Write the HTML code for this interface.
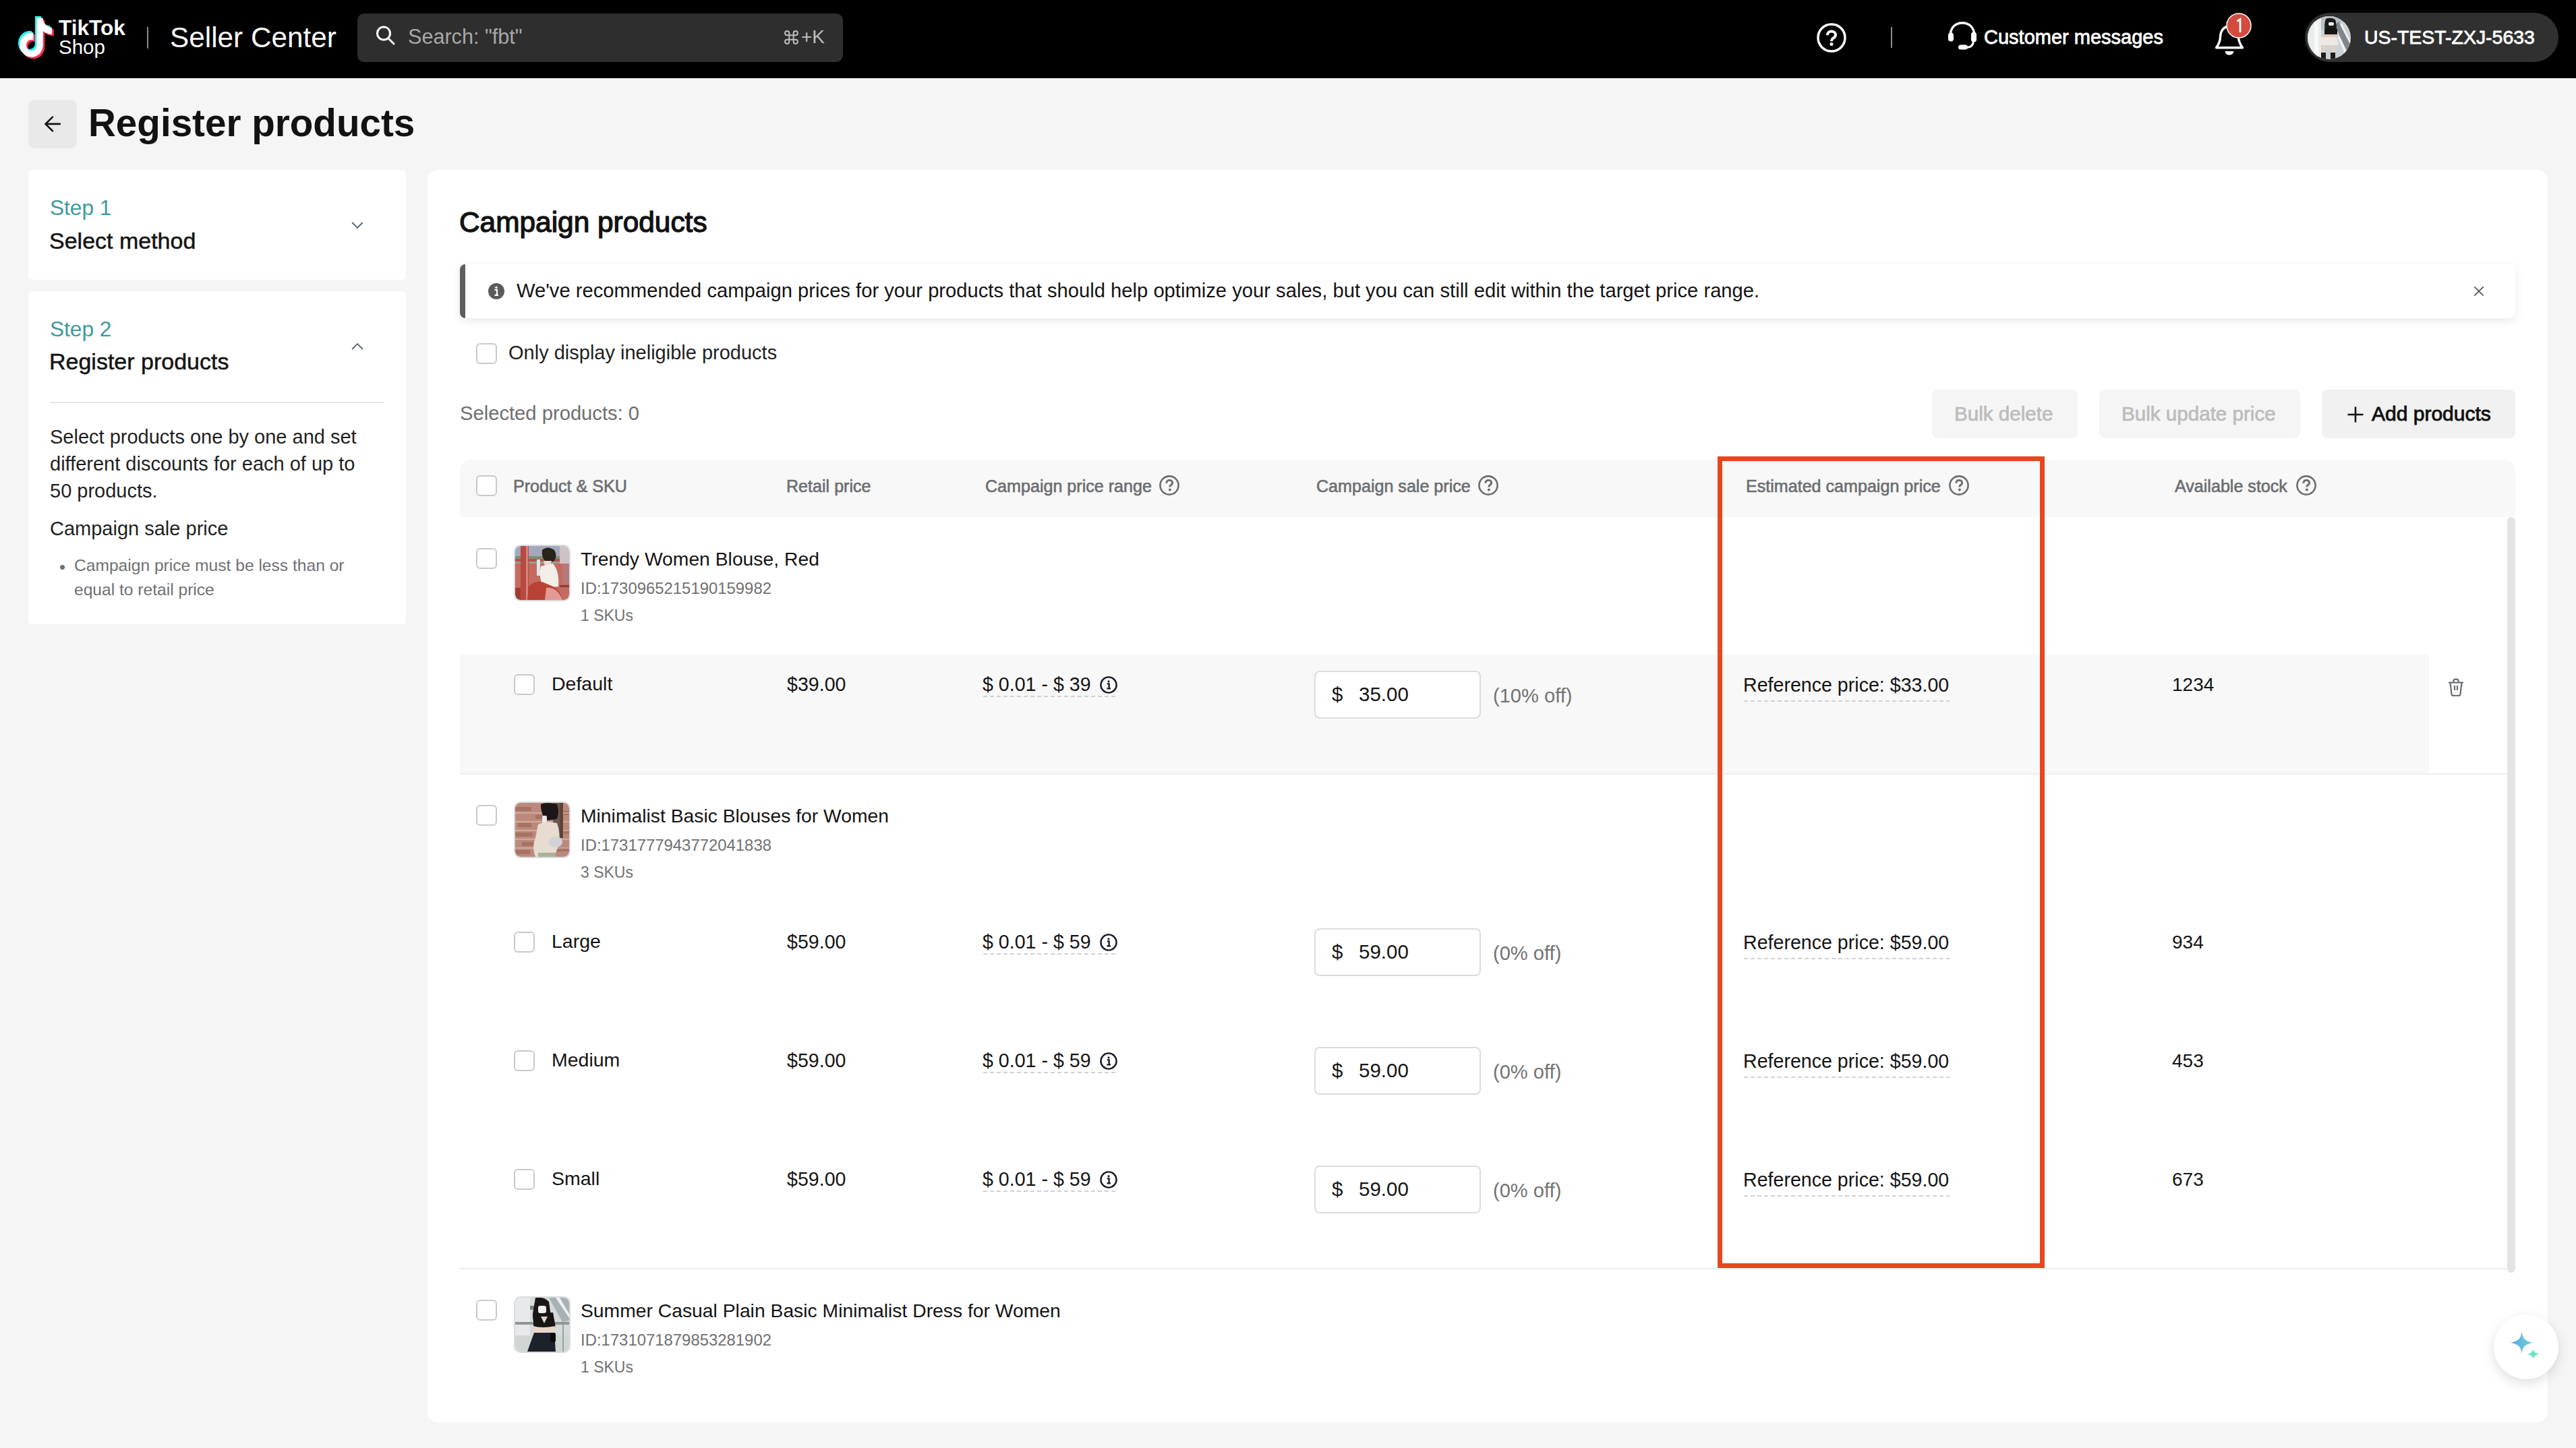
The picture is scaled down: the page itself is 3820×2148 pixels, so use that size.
<!DOCTYPE html>
<html><head><meta charset="utf-8"><title>Register products</title>
<style>
html,body{margin:0;padding:0;width:3820px;height:2148px;overflow:hidden;background:#f5f5f5;}
body{position:relative;font-family:"Liberation Sans",sans-serif;}
.t{position:absolute;white-space:nowrap;font-family:"Liberation Sans",sans-serif;}
.r{position:absolute;}
</style></head><body>
<div class="r" style="left:0px;top:0px;width:3820px;height:116px;background:#000"></div>
<svg class="r" style="left:0px;top:0px;" width="120" height="116" viewBox="0 0 120 116"><path transform="translate(23.40,24.00) scale(2.28,2.42)" d="M12.525.02c1.31-.02 2.61-.01 3.91-.02.08 1.53.63 3.09 1.75 4.17 1.12 1.11 2.7 1.62 4.24 1.79v4.03c-1.44-.05-2.89-.35-4.2-.97-.57-.26-1.1-.59-1.62-.93-.01 2.92.01 5.84-.02 8.75-.08 1.4-.54 2.79-1.35 3.94-1.310 1.92-3.58 3.17-5.91 3.21-1.43.08-2.86-.31-4.08-1.03-2.02-1.19-3.44-3.37-3.65-5.71-.02-.5-.03-1-.01-1.49.18-1.9 1.12-3.72 2.58-4.96 1.66-1.44 3.98-2.13 6.15-1.72.02 1.480-.04 2.96-.04 4.44-.99-.32-2.15-.23-3.02.37-.63.41-1.11 1.04-1.36 1.75-.21.51-.15 1.07-.14 1.61.24 1.64 1.82 3.020 3.5 2.87 1.12-.01 2.19-.66 2.77-1.61.19-.33.4-.67.41-1.06.1-1.79.06-3.57.07-5.36.01-4.03-.01-8.05.02-12.07z" fill="#25F4EE"/><path transform="translate(28.60,29.20) scale(2.28,2.42)" d="M12.525.02c1.31-.02 2.61-.01 3.91-.02.08 1.53.63 3.09 1.75 4.17 1.12 1.11 2.7 1.62 4.24 1.79v4.03c-1.44-.05-2.89-.35-4.2-.97-.57-.26-1.1-.59-1.62-.93-.01 2.92.01 5.84-.02 8.75-.08 1.4-.54 2.79-1.35 3.94-1.310 1.92-3.58 3.17-5.91 3.21-1.43.08-2.86-.31-4.08-1.03-2.02-1.19-3.44-3.37-3.65-5.71-.02-.5-.03-1-.01-1.49.18-1.9 1.12-3.72 2.58-4.96 1.66-1.44 3.98-2.13 6.15-1.72.02 1.480-.04 2.96-.04 4.44-.99-.32-2.15-.23-3.02.37-.63.41-1.11 1.04-1.36 1.75-.21.51-.15 1.07-.14 1.61.24 1.64 1.82 3.020 3.5 2.87 1.12-.01 2.19-.66 2.77-1.61.19-.33.4-.67.41-1.06.1-1.79.06-3.57.07-5.36.01-4.03-.01-8.05.02-12.07z" fill="#FE2C55"/><path transform="translate(26.00,26.60) scale(2.28,2.42)" d="M12.525.02c1.31-.02 2.61-.01 3.91-.02.08 1.53.63 3.09 1.75 4.17 1.12 1.11 2.7 1.62 4.24 1.79v4.03c-1.44-.05-2.89-.35-4.2-.97-.57-.26-1.1-.59-1.62-.93-.01 2.92.01 5.84-.02 8.75-.08 1.4-.54 2.79-1.35 3.94-1.310 1.92-3.58 3.17-5.91 3.21-1.43.08-2.86-.31-4.08-1.03-2.02-1.19-3.44-3.37-3.65-5.71-.02-.5-.03-1-.01-1.49.18-1.9 1.12-3.72 2.58-4.96 1.66-1.44 3.98-2.13 6.15-1.72.02 1.480-.04 2.96-.04 4.44-.99-.32-2.15-.23-3.02.37-.63.41-1.11 1.04-1.36 1.75-.21.51-.15 1.07-.14 1.61.24 1.64 1.82 3.020 3.5 2.87 1.12-.01 2.19-.66 2.77-1.61.19-.33.4-.67.41-1.06.1-1.79.06-3.57.07-5.36.01-4.03-.01-8.05.02-12.07z" fill="#fff"/></svg>
<div class="t" style="left:87.0px;top:26.1px;font-size:31.6px;line-height:31.6px;font-weight:700;color:#fff;">TikTok</div>
<div class="t" style="left:87.0px;top:54.9px;font-size:29.5px;line-height:29.5px;font-weight:400;color:#fff;">Shop</div>
<div class="r" style="left:218px;top:40px;width:2px;height:32px;background:#8a8a8a"></div>
<div class="t" style="left:252.0px;top:34.5px;font-size:42.3px;line-height:42.3px;font-weight:400;color:#fff;">Seller Center</div>
<div class="r" style="left:530px;top:20px;width:720px;height:72px;background:#2e2e2e;border-radius:10px"></div>
<svg class="r" style="left:552px;top:33px;" width="40" height="40" viewBox="0 0 40 40"><circle cx="17" cy="16.5" r="9.5" fill="none" stroke="#fff" stroke-width="3"/><line x1="24" y1="24" x2="32" y2="32" stroke="#fff" stroke-width="3" stroke-linecap="round"/></svg>
<div class="t" style="left:605.0px;top:39.0px;font-size:30.6px;line-height:30.6px;font-weight:400;color:#a8a8a8;">Search: "fbt"</div>
<svg class="r" style="left:1163px;top:44.5px;" width="22" height="22" viewBox="0 0 22 22"><path d="M7.3 4.199999999999999 A3.1 3.1 0 1 0 4.199999999999999 7.3 L16.8 7.3 A3.1 3.1 0 1 0 13.7 4.199999999999999 L13.7 16.8 A3.1 3.1 0 1 0 16.8 13.7 L4.199999999999999 13.7 A3.1 3.1 0 1 0 7.3 16.8 Z" fill="none" stroke="#bdbdbd" stroke-width="2"/></svg>
<div class="t" style="left:1188.0px;top:41.2px;font-size:28px;line-height:28px;font-weight:400;color:#bdbdbd;">+K</div>
<svg class="r" style="left:2690px;top:30px;" width="52" height="52" viewBox="0 0 52 52"><circle cx="26" cy="26" r="20" fill="none" stroke="#fff" stroke-width="3.5"/><path d="M19.9 22.2 C19.9 18.7 22.5 16.6 26 16.6 C29.5 16.6 32 18.9 32 21.8 C32 24.6 30.1 25.8 28.1 27 C26.7 27.9 26 28.8 26 30.4 V31.2" fill="none" stroke="#fff" stroke-width="4"/><circle cx="26" cy="35.4" r="2.5" fill="#fff"/></svg>
<div class="r" style="left:2804px;top:40px;width:2px;height:31px;background:#8a8a8a"></div>
<svg class="r" style="left:2884px;top:28px;" width="52" height="52" viewBox="0 0 52 52"><path d="M8 26 C8 13 15.5 6 26 6 C36.5 6 44 13 44 26" fill="none" stroke="#fff" stroke-width="3.4"/><rect x="5" y="20.5" width="8" height="13" rx="4" fill="#fff"/><rect x="39" y="19.5" width="8" height="15" rx="4" fill="#fff"/><path d="M42.5 33 C42 38.5 39 42 33 42.5 L26 42.5" fill="none" stroke="#fff" stroke-width="3"/><rect x="20" y="38.6" width="14" height="7" rx="3.5" fill="#fff"/></svg>
<div class="t" style="left:2942.0px;top:41.4px;font-size:29px;line-height:29px;font-weight:400;color:#fff;-webkit-text-stroke:0.8px #fff;">Customer messages</div>
<svg class="r" style="left:3280px;top:30px;" width="56" height="56" viewBox="0 0 56 56"><path d="M6.5 40.7 C9.5 37 12.3 33 12.6 24 C13 15 18.5 8.8 26 8.8 C33.5 8.8 39 15 39.4 24 C39.7 33 42.5 37 45.5 40.7 Z" fill="none" stroke="#fff" stroke-width="3.4" stroke-linejoin="round"/><path d="M19.5 46 H32.5 A6.5 5.6 0 0 1 19.5 46 Z" fill="#fff"/></svg>
<svg class="r" style="left:3300px;top:18px;" width="40" height="40" viewBox="0 0 40 40"><circle cx="20" cy="20" r="18" fill="#d34b3f" stroke="#fff" stroke-width="1.6"/><path d="M17.5 13.5 L22 10.5 L22 30" fill="none" stroke="#fff" stroke-width="2.8"/></svg>
<div class="r" style="left:3418px;top:19px;width:376px;height:73px;background:#303030;border-radius:37px"></div>
<svg class="r" style="left:3422px;top:24px;" width="64" height="64" viewBox="0 0 64 64"><defs><clipPath id="av"><circle cx="32" cy="32" r="32"/></clipPath></defs><g clip-path="url(#av)"><rect width="64" height="64" fill="#cdd2d4"/><rect x="0" y="0" width="20" height="64" fill="#e9ecec"/><rect x="10" y="0" width="6" height="64" fill="#f7f8f8"/><rect x="20" y="0" width="30" height="20" fill="#b9bfc2"/><path d="M46 8 L64 44 L64 64 L58 64 L40 14z" fill="#7f878b"/><path d="M50 10 L64 38 L64 42 L48 12z" fill="#f4f5f5"/><path d="M44 22 L62 60 L58 62 L42 26z" fill="#eef0f1"/><path d="M27 4 Q34 1 41 5 Q44 14 42 22 L26 22 Q24 12 27 4z" fill="#1b1b1b"/><rect x="31" y="9" width="8" height="5" rx="2" fill="#f2f2f2"/><path d="M25 19 Q34 16 44 19 L44 31 L25 31z" fill="#151515"/><rect x="22" y="27" width="24" height="4" fill="#e2cbbd"/><path d="M20 31 L43 31 L46 43 L16 43z" fill="#ece8e3"/><rect x="21" y="43" width="5" height="12" fill="#e5d0c2"/><rect x="35" y="43" width="5" height="12" fill="#e5d0c2"/><rect x="20" y="54" width="7" height="10" fill="#1c1c1c"/><rect x="34" y="54" width="7" height="10" fill="#1c1c1c"/></g></svg>
<div class="t" style="left:3506.0px;top:40.8px;font-size:28.45px;line-height:28.45px;font-weight:400;color:#fff;-webkit-text-stroke:0.8px #fff;">US-TEST-ZXJ-5633</div>
<div class="r" style="left:0px;top:116px;width:3820px;height:2032px;background:#f5f5f5"></div>
<div class="r" style="left:42px;top:148px;width:72px;height:72px;background:#e9e9e9;border-radius:9px"></div>
<svg class="r" style="left:60px;top:166px;" width="36" height="36" viewBox="0 0 36 36"><path d="M18 7.6 L7.4 17.9 L18 28.2 M8 17.9 H28.8" fill="none" stroke="#141414" stroke-width="2.6" stroke-linecap="round" stroke-linejoin="round"/></svg>
<div class="t" style="left:131.0px;top:154.9px;font-size:56.6px;line-height:56.6px;font-weight:700;color:#121212;">Register products</div>
<div class="r" style="left:42px;top:252px;width:560px;height:163px;background:#fff;border-radius:6px"></div>
<div class="t" style="left:74.0px;top:293.1px;font-size:31.6px;line-height:31.6px;font-weight:400;color:#3e9a9b;">Step 1</div>
<div class="t" style="left:73.0px;top:339.6px;font-size:34px;line-height:34px;font-weight:400;color:#141414;-webkit-text-stroke:0.5px #141414;">Select method</div>
<svg class="r" style="left:516px;top:324px;" width="28" height="20" viewBox="0 0 28 20"><path d="M6.2 6 L14 13.8 L21.8 6" fill="none" stroke="#596377" stroke-width="1.9"/></svg>
<div class="r" style="left:42px;top:432px;width:560px;height:494px;background:#fff;border-radius:6px"></div>
<div class="t" style="left:74.0px;top:473.1px;font-size:31.6px;line-height:31.6px;font-weight:400;color:#3e9a9b;">Step 2</div>
<div class="t" style="left:73.0px;top:519.1px;font-size:34px;line-height:34px;font-weight:400;color:#141414;-webkit-text-stroke:0.5px #141414;">Register products</div>
<svg class="r" style="left:516px;top:504px;" width="28" height="20" viewBox="0 0 28 20"><path d="M6.2 14 L14 6.2 L21.8 14" fill="none" stroke="#596377" stroke-width="1.9"/></svg>
<div class="r" style="left:74px;top:596px;width:496px;height:2px;background:#e4e4ea"></div>
<div class="t" style="left:74.0px;top:634.1px;font-size:29px;line-height:29px;font-weight:400;color:#1f1f1f;">Select products one by one and set</div>
<div class="t" style="left:74.0px;top:674.1px;font-size:29px;line-height:29px;font-weight:400;color:#1f1f1f;">different discounts for each of up to</div>
<div class="t" style="left:74.0px;top:714.1px;font-size:29px;line-height:29px;font-weight:400;color:#1f1f1f;">50 products.</div>
<div class="t" style="left:74.0px;top:770.4px;font-size:29px;line-height:29px;font-weight:400;color:#1f1f1f;">Campaign sale price</div>
<div class="r" style="left:89px;top:838px;width:7px;height:7px;background:#6f7073;border-radius:50%"></div>
<div class="t" style="left:110.0px;top:827.1px;font-size:24.6px;line-height:24.6px;font-weight:400;color:#6f7073;">Campaign price must be less than or</div>
<div class="t" style="left:110.0px;top:863.1px;font-size:24.6px;line-height:24.6px;font-weight:400;color:#6f7073;">equal to retail price</div>
<div class="r" style="left:634px;top:252px;width:3144px;height:1858px;background:#fff;border-radius:16px"></div>
<div class="t" style="left:681.0px;top:308.6px;font-size:42.4px;line-height:42.4px;font-weight:400;color:#121212;-webkit-text-stroke:1.3px #121212;">Campaign products</div>
<div class="r" style="left:682px;top:392px;width:3048px;height:80px;background:#fff;border-radius:8px;box-shadow:0 4px 14px rgba(0,0,0,0.09)"></div>
<div class="r" style="left:682px;top:392px;width:8px;height:80px;background:#5e5e5e;border-radius:8px 0 0 8px"></div>
<svg class="r" style="left:722px;top:418px;" width="28" height="28" viewBox="0 0 28 28"><circle cx="14" cy="14" r="12" fill="#5b5b5b"/><circle cx="14" cy="8.6" r="1.8" fill="#fff"/><path d="M11.5 12 H15 V19.5 M11.5 19.8 H17" fill="none" stroke="#fff" stroke-width="2.2"/></svg>
<div class="t" style="left:766.0px;top:417.2px;font-size:29.2px;line-height:29.2px;font-weight:400;color:#141414;">We've recommended campaign prices for your products that should help optimize your sales, but you can still edit within the target price range.</div>
<svg class="r" style="left:3664px;top:420px;" width="24" height="24" viewBox="0 0 24 24"><path d="M5.3 5.3 L18.7 18.7 M18.7 5.3 L5.3 18.7" stroke="#555" stroke-width="1.7"/></svg>
<div class="r" style="left:706px;top:509px;width:31px;height:31px;background:#fff;border:2px solid #c9c9c9;border-radius:6px;box-sizing:border-box"></div>
<div class="t" style="left:754.0px;top:509.4px;font-size:29px;line-height:29px;font-weight:400;color:#1f1f1f;">Only display ineligible products</div>
<div class="t" style="left:682.0px;top:599.2px;font-size:29.2px;line-height:29.2px;font-weight:400;color:#6d6e70;">Selected products: 0</div>
<div class="r" style="left:2865px;top:578px;width:216px;height:72px;background:#f5f5f5;border-radius:8px"></div>
<div class="t" style="left:2898.0px;top:598.8px;font-size:29.6px;line-height:29.6px;font-weight:400;color:#bcbcbc;-webkit-text-stroke:0.7px #bcbcbc;">Bulk delete</div>
<div class="r" style="left:3113px;top:578px;width:298px;height:72px;background:#f5f5f5;border-radius:8px"></div>
<div class="t" style="left:3146.0px;top:598.8px;font-size:29.6px;line-height:29.6px;font-weight:400;color:#bcbcbc;-webkit-text-stroke:0.7px #bcbcbc;">Bulk update price</div>
<div class="r" style="left:3443px;top:578px;width:287px;height:72px;background:#f1f1f1;border-radius:8px"></div>
<svg class="r" style="left:3478px;top:600px;" width="30" height="30" viewBox="0 0 30 30"><path d="M15 3.5 V26.5 M3.5 15 H26.5" stroke="#121212" stroke-width="2.6"/></svg>
<div class="t" style="left:3517.0px;top:598.5px;font-size:30px;line-height:30px;font-weight:400;color:#121212;-webkit-text-stroke:0.9px #121212;">Add products</div>
<div class="r" style="left:682px;top:682px;width:3048px;height:85px;background:#f8f8f8;border-radius:16px 16px 0 0"></div>
<div class="r" style="left:706px;top:705px;width:31px;height:31px;background:#fff;border:2px solid #c9c9c9;border-radius:6px;box-sizing:border-box"></div>
<div class="t" style="left:761.0px;top:709.3px;font-size:25.1px;line-height:25.1px;font-weight:400;color:#6b6d70;-webkit-text-stroke:0.6px #6b6d70;">Product &amp; SKU</div>
<div class="t" style="left:1166.0px;top:709.3px;font-size:25.1px;line-height:25.1px;font-weight:400;color:#6b6d70;-webkit-text-stroke:0.6px #6b6d70;">Retail price</div>
<div class="t" style="left:1461.0px;top:709.3px;font-size:25.1px;line-height:25.1px;font-weight:400;color:#6b6d70;-webkit-text-stroke:0.6px #6b6d70;">Campaign price range</div>
<svg class="r" style="left:1718px;top:704px;" width="32" height="32" viewBox="0 0 32 32"><circle cx="16" cy="16" r="13.6" fill="none" stroke="#6b6d70" stroke-width="2.6"/><path d="M11.8 12.8c0-2.7 2-4.5 4.4-4.5s4.4 1.7 4.4 3.9c0 1.9-1.2 2.8-2.5 3.6-.8.5-1.2 1-1.2 2.1v.7" fill="none" stroke="#6b6d70" stroke-width="3.1"/><circle cx="16.9" cy="22.4" r="2" fill="#6b6d70"/></svg>
<div class="t" style="left:1952.0px;top:709.3px;font-size:25.1px;line-height:25.1px;font-weight:400;color:#6b6d70;-webkit-text-stroke:0.6px #6b6d70;">Campaign sale price</div>
<svg class="r" style="left:2191px;top:704px;" width="32" height="32" viewBox="0 0 32 32"><circle cx="16" cy="16" r="13.6" fill="none" stroke="#6b6d70" stroke-width="2.6"/><path d="M11.8 12.8c0-2.7 2-4.5 4.4-4.5s4.4 1.7 4.4 3.9c0 1.9-1.2 2.8-2.5 3.6-.8.5-1.2 1-1.2 2.1v.7" fill="none" stroke="#6b6d70" stroke-width="3.1"/><circle cx="16.9" cy="22.4" r="2" fill="#6b6d70"/></svg>
<div class="t" style="left:2589.0px;top:709.3px;font-size:25.1px;line-height:25.1px;font-weight:400;color:#6b6d70;-webkit-text-stroke:0.6px #6b6d70;">Estimated campaign price</div>
<svg class="r" style="left:2889px;top:704px;" width="32" height="32" viewBox="0 0 32 32"><circle cx="16" cy="16" r="13.6" fill="none" stroke="#6b6d70" stroke-width="2.6"/><path d="M11.8 12.8c0-2.7 2-4.5 4.4-4.5s4.4 1.7 4.4 3.9c0 1.9-1.2 2.8-2.5 3.6-.8.5-1.2 1-1.2 2.1v.7" fill="none" stroke="#6b6d70" stroke-width="3.1"/><circle cx="16.9" cy="22.4" r="2" fill="#6b6d70"/></svg>
<div class="t" style="left:3225.0px;top:709.3px;font-size:25.1px;line-height:25.1px;font-weight:400;color:#6b6d70;-webkit-text-stroke:0.6px #6b6d70;">Available stock</div>
<svg class="r" style="left:3404px;top:704px;" width="32" height="32" viewBox="0 0 32 32"><circle cx="16" cy="16" r="13.6" fill="none" stroke="#6b6d70" stroke-width="2.6"/><path d="M11.8 12.8c0-2.7 2-4.5 4.4-4.5s4.4 1.7 4.4 3.9c0 1.9-1.2 2.8-2.5 3.6-.8.5-1.2 1-1.2 2.1v.7" fill="none" stroke="#6b6d70" stroke-width="3.1"/><circle cx="16.9" cy="22.4" r="2" fill="#6b6d70"/></svg>
<div class="r" style="left:706px;top:813px;width:31px;height:31px;background:#fff;border:2px solid #c9c9c9;border-radius:6px;box-sizing:border-box"></div>
<svg class="r" style="left:762px;top:808px;" width="84" height="84" viewBox="0 0 84 84"><defs><clipPath id="tc1"><rect x="2" y="2" width="80" height="80" rx="8"/></clipPath><filter id="bl1" x="-5%" y="-5%" width="110%" height="110%"><feGaussianBlur stdDeviation="0.6"/></filter></defs><g clip-path="url(#tc1)"><g transform="translate(2,2)" filter="url(#bl1)"><rect width="80" height="80" fill="#c46b60"/><rect x="0" y="0" width="80" height="17" fill="#a3a9bd"/><rect x="0" y="15" width="80" height="4" fill="#7d8f74"/><rect x="0" y="19" width="80" height="4" fill="#b5514a"/><rect x="0" y="23" width="80" height="3" fill="#8fa38a"/><rect x="8" y="0" width="12" height="80" fill="#b9483f"/><rect x="16" y="0" width="3" height="80" fill="#d58478"/><rect x="32" y="20" width="5" height="24" fill="#dfe4ee"/><rect x="66" y="0" width="14" height="26" fill="#cfc2c4"/><rect x="70" y="26" width="10" height="30" fill="#b8787a"/><rect x="66" y="58" width="14" height="3" fill="#8e3c36"/><path d="M40 6 Q48 -1 58 6 Q63 14 58 22 L48 26 Q38 18 40 6z" fill="#2a201e"/><path d="M42 22 L54 22 L52 30 L44 30z" fill="#f0d9cf"/><path d="M38 30 L56 26 Q66 38 64 60 L42 62 Q34 46 38 30z" fill="#f3efe8"/><path d="M20 60 Q30 50 42 54 L56 60 Q66 64 70 80 L18 80z" fill="#b94236"/><path d="M46 62 Q62 60 70 80 L44 80z" fill="#e39a95"/><rect x="0" y="62" width="8" height="18" fill="#a13a33"/></g></g><rect x="1" y="1" width="82" height="82" rx="9" fill="none" stroke="#d9dbde" stroke-width="2"/></svg>
<div class="t" style="left:861.0px;top:814.9px;font-size:28.3px;line-height:28.3px;font-weight:400;color:#141414;">Trendy Women Blouse, Red</div>
<div class="t" style="left:861.0px;top:861.2px;font-size:23.9px;line-height:23.9px;font-weight:400;color:#707172;">ID:1730965215190159982</div>
<div class="t" style="left:861.0px;top:901.5px;font-size:23px;line-height:23px;font-weight:400;color:#707172;">1 SKUs</div>
<div class="r" style="left:682px;top:971px;width:2920px;height:176px;background:#f8f8f8"></div>
<div class="r" style="left:762px;top:1000px;width:31px;height:31px;background:#fff;border:2px solid #c9c9c9;border-radius:6px;box-sizing:border-box"></div>
<div class="t" style="left:818.0px;top:1000.3px;font-size:28.5px;line-height:28.5px;font-weight:400;color:#141414;">Default</div>
<div class="t" style="left:1167.0px;top:1000.7px;font-size:28.6px;line-height:28.6px;font-weight:400;color:#141414;">$39.00</div>
<div class="t" style="left:1457.0px;top:1000.7px;font-size:28.6px;line-height:28.6px;font-weight:400;color:#141414;">$ 0.01 - $ 39</div>
<svg class="r" style="left:1630px;top:1002px;" width="28" height="28" viewBox="0 0 28 28"><circle cx="14" cy="14" r="11.6" fill="none" stroke="#161823" stroke-width="2.4"/><circle cx="14" cy="8.8" r="1.6" fill="#161823"/><path d="M11.8 12.4 H14.6 V19 M11.4 19.4 H17" fill="none" stroke="#161823" stroke-width="2.3"/></svg>
<div class="r" style="left:1458px;top:1032px;width:199px;height:2px;background-image:repeating-linear-gradient(90deg,#cfd1d4 0 6px,transparent 6px 10px)"></div>
<div class="r" style="left:1949px;top:995px;width:247px;height:71px;background:#fff;border:2px solid #dcdcdc;border-radius:8px;box-sizing:border-box"></div>
<div class="t" style="left:1975.0px;top:1015.4px;font-size:29.5px;line-height:29.5px;font-weight:400;color:#141414;">$</div>
<div class="t" style="left:2015.0px;top:1015.4px;font-size:29.5px;line-height:29.5px;font-weight:400;color:#141414;">35.00</div>
<div class="t" style="left:2214.0px;top:1017.7px;font-size:29.1px;line-height:29.1px;font-weight:400;color:#737373;">(10% off)</div>
<div class="t" style="left:2585.0px;top:1002.2px;font-size:28.6px;line-height:28.6px;font-weight:400;color:#141414;">Reference price: $33.00</div>
<div class="r" style="left:2586px;top:1039px;width:305px;height:2px;background-image:repeating-linear-gradient(90deg,#cfd1d4 0 6px,transparent 6px 10px)"></div>
<div class="t" style="left:3221.0px;top:1002.2px;font-size:28px;line-height:28px;font-weight:400;color:#141414;">1234</div>
<svg class="r" style="left:3628px;top:1004px;" width="28" height="30" viewBox="0 0 28 30"><path d="M3 8.5 H25 M10.3 8.5 V6.8 Q10.3 3.6 13.2 3.6 H14.8 Q17.7 3.6 17.7 6.8 V8.5 M5.5 9 L7.5 25.5 Q8 28 10.5 28 H17.5 Q20 28 20.5 25.5 L22.5 9 M12 13 V20 M16 13 V20" fill="none" stroke="#686b6e" stroke-width="2.2"/></svg>
<div class="r" style="left:682px;top:1147px;width:3036px;height:2px;background:#eeeeee"></div>
<div class="r" style="left:706px;top:1194px;width:31px;height:31px;background:#fff;border:2px solid #c9c9c9;border-radius:6px;box-sizing:border-box"></div>
<svg class="r" style="left:762px;top:1189px;" width="84" height="84" viewBox="0 0 84 84"><defs><clipPath id="tc2"><rect x="2" y="2" width="80" height="80" rx="8"/></clipPath><filter id="bl2" x="-5%" y="-5%" width="110%" height="110%"><feGaussianBlur stdDeviation="0.6"/></filter></defs><g clip-path="url(#tc2)"><g transform="translate(2,2)" filter="url(#bl2)"><rect width="80" height="80" fill="#bb8a7c"/><g fill="#a06b5d" opacity=".75"><rect x="0" y="6" width="24" height="6"/><rect x="30" y="18" width="22" height="6"/><rect x="4" y="30" width="20" height="6"/><rect x="0" y="44" width="26" height="6"/><rect x="10" y="58" width="20" height="6"/><rect x="0" y="70" width="22" height="6"/><rect x="72" y="12" width="8" height="6"/><rect x="72" y="40" width="8" height="6"/><rect x="60" y="66" width="20" height="6"/></g><g fill="#d8b9ad" opacity=".7"><rect x="0" y="14" width="80" height="2"/><rect x="0" y="27" width="80" height="2"/><rect x="0" y="40" width="80" height="2"/><rect x="0" y="53" width="80" height="2"/><rect x="0" y="66" width="80" height="2"/></g><rect x="66" y="0" width="5" height="52" fill="#5e433b"/><rect x="56" y="0" width="10" height="50" fill="#6a5850"/><path d="M38 2 Q46 -2 62 2 Q66 12 62 24 L48 26 Q38 20 38 2z" fill="#1c1616"/><rect x="40" y="19" width="7" height="11" rx="2" fill="#e9e9ea"/><path d="M34 32 Q46 26 62 30 Q68 46 64 64 L58 80 L30 80 Q24 66 30 52z" fill="#e7dccf"/><ellipse cx="60" cy="58" rx="10" ry="8" fill="#d2d3d6"/><rect x="34" y="74" width="26" height="6" fill="#aab09a"/></g></g><rect x="1" y="1" width="82" height="82" rx="9" fill="none" stroke="#d9dbde" stroke-width="2"/></svg>
<div class="t" style="left:861.0px;top:1195.9px;font-size:28.3px;line-height:28.3px;font-weight:400;color:#141414;">Minimalist Basic Blouses for Women</div>
<div class="t" style="left:861.0px;top:1242.2px;font-size:23.9px;line-height:23.9px;font-weight:400;color:#707172;">ID:1731777943772041838</div>
<div class="t" style="left:861.0px;top:1282.5px;font-size:23px;line-height:23px;font-weight:400;color:#707172;">3 SKUs</div>
<div class="r" style="left:762px;top:1382px;width:31px;height:31px;background:#fff;border:2px solid #c9c9c9;border-radius:6px;box-sizing:border-box"></div>
<div class="t" style="left:818.0px;top:1382.3px;font-size:28.5px;line-height:28.5px;font-weight:400;color:#141414;">Large</div>
<div class="t" style="left:1167.0px;top:1382.7px;font-size:28.6px;line-height:28.6px;font-weight:400;color:#141414;">$59.00</div>
<div class="t" style="left:1457.0px;top:1382.7px;font-size:28.6px;line-height:28.6px;font-weight:400;color:#141414;">$ 0.01 - $ 59</div>
<svg class="r" style="left:1630px;top:1384px;" width="28" height="28" viewBox="0 0 28 28"><circle cx="14" cy="14" r="11.6" fill="none" stroke="#161823" stroke-width="2.4"/><circle cx="14" cy="8.8" r="1.6" fill="#161823"/><path d="M11.8 12.4 H14.6 V19 M11.4 19.4 H17" fill="none" stroke="#161823" stroke-width="2.3"/></svg>
<div class="r" style="left:1458px;top:1414px;width:199px;height:2px;background-image:repeating-linear-gradient(90deg,#cfd1d4 0 6px,transparent 6px 10px)"></div>
<div class="r" style="left:1949px;top:1377px;width:247px;height:71px;background:#fff;border:2px solid #dcdcdc;border-radius:8px;box-sizing:border-box"></div>
<div class="t" style="left:1975.0px;top:1397.4px;font-size:29.5px;line-height:29.5px;font-weight:400;color:#141414;">$</div>
<div class="t" style="left:2015.0px;top:1397.4px;font-size:29.5px;line-height:29.5px;font-weight:400;color:#141414;">59.00</div>
<div class="t" style="left:2214.0px;top:1399.7px;font-size:29.1px;line-height:29.1px;font-weight:400;color:#737373;">(0% off)</div>
<div class="t" style="left:2585.0px;top:1384.2px;font-size:28.6px;line-height:28.6px;font-weight:400;color:#141414;">Reference price: $59.00</div>
<div class="r" style="left:2586px;top:1421px;width:305px;height:2px;background-image:repeating-linear-gradient(90deg,#cfd1d4 0 6px,transparent 6px 10px)"></div>
<div class="t" style="left:3221.0px;top:1384.2px;font-size:28px;line-height:28px;font-weight:400;color:#141414;">934</div>
<div class="r" style="left:762px;top:1558px;width:31px;height:31px;background:#fff;border:2px solid #c9c9c9;border-radius:6px;box-sizing:border-box"></div>
<div class="t" style="left:818.0px;top:1558.3px;font-size:28.5px;line-height:28.5px;font-weight:400;color:#141414;">Medium</div>
<div class="t" style="left:1167.0px;top:1558.7px;font-size:28.6px;line-height:28.6px;font-weight:400;color:#141414;">$59.00</div>
<div class="t" style="left:1457.0px;top:1558.7px;font-size:28.6px;line-height:28.6px;font-weight:400;color:#141414;">$ 0.01 - $ 59</div>
<svg class="r" style="left:1630px;top:1560px;" width="28" height="28" viewBox="0 0 28 28"><circle cx="14" cy="14" r="11.6" fill="none" stroke="#161823" stroke-width="2.4"/><circle cx="14" cy="8.8" r="1.6" fill="#161823"/><path d="M11.8 12.4 H14.6 V19 M11.4 19.4 H17" fill="none" stroke="#161823" stroke-width="2.3"/></svg>
<div class="r" style="left:1458px;top:1590px;width:199px;height:2px;background-image:repeating-linear-gradient(90deg,#cfd1d4 0 6px,transparent 6px 10px)"></div>
<div class="r" style="left:1949px;top:1553px;width:247px;height:71px;background:#fff;border:2px solid #dcdcdc;border-radius:8px;box-sizing:border-box"></div>
<div class="t" style="left:1975.0px;top:1573.4px;font-size:29.5px;line-height:29.5px;font-weight:400;color:#141414;">$</div>
<div class="t" style="left:2015.0px;top:1573.4px;font-size:29.5px;line-height:29.5px;font-weight:400;color:#141414;">59.00</div>
<div class="t" style="left:2214.0px;top:1575.7px;font-size:29.1px;line-height:29.1px;font-weight:400;color:#737373;">(0% off)</div>
<div class="t" style="left:2585.0px;top:1560.2px;font-size:28.6px;line-height:28.6px;font-weight:400;color:#141414;">Reference price: $59.00</div>
<div class="r" style="left:2586px;top:1597px;width:305px;height:2px;background-image:repeating-linear-gradient(90deg,#cfd1d4 0 6px,transparent 6px 10px)"></div>
<div class="t" style="left:3221.0px;top:1560.2px;font-size:28px;line-height:28px;font-weight:400;color:#141414;">453</div>
<div class="r" style="left:762px;top:1734px;width:31px;height:31px;background:#fff;border:2px solid #c9c9c9;border-radius:6px;box-sizing:border-box"></div>
<div class="t" style="left:818.0px;top:1734.3px;font-size:28.5px;line-height:28.5px;font-weight:400;color:#141414;">Small</div>
<div class="t" style="left:1167.0px;top:1734.7px;font-size:28.6px;line-height:28.6px;font-weight:400;color:#141414;">$59.00</div>
<div class="t" style="left:1457.0px;top:1734.7px;font-size:28.6px;line-height:28.6px;font-weight:400;color:#141414;">$ 0.01 - $ 59</div>
<svg class="r" style="left:1630px;top:1736px;" width="28" height="28" viewBox="0 0 28 28"><circle cx="14" cy="14" r="11.6" fill="none" stroke="#161823" stroke-width="2.4"/><circle cx="14" cy="8.8" r="1.6" fill="#161823"/><path d="M11.8 12.4 H14.6 V19 M11.4 19.4 H17" fill="none" stroke="#161823" stroke-width="2.3"/></svg>
<div class="r" style="left:1458px;top:1766px;width:199px;height:2px;background-image:repeating-linear-gradient(90deg,#cfd1d4 0 6px,transparent 6px 10px)"></div>
<div class="r" style="left:1949px;top:1729px;width:247px;height:71px;background:#fff;border:2px solid #dcdcdc;border-radius:8px;box-sizing:border-box"></div>
<div class="t" style="left:1975.0px;top:1749.4px;font-size:29.5px;line-height:29.5px;font-weight:400;color:#141414;">$</div>
<div class="t" style="left:2015.0px;top:1749.4px;font-size:29.5px;line-height:29.5px;font-weight:400;color:#141414;">59.00</div>
<div class="t" style="left:2214.0px;top:1751.7px;font-size:29.1px;line-height:29.1px;font-weight:400;color:#737373;">(0% off)</div>
<div class="t" style="left:2585.0px;top:1736.2px;font-size:28.6px;line-height:28.6px;font-weight:400;color:#141414;">Reference price: $59.00</div>
<div class="r" style="left:2586px;top:1773px;width:305px;height:2px;background-image:repeating-linear-gradient(90deg,#cfd1d4 0 6px,transparent 6px 10px)"></div>
<div class="t" style="left:3221.0px;top:1736.2px;font-size:28px;line-height:28px;font-weight:400;color:#141414;">673</div>
<div class="r" style="left:682px;top:1881px;width:3036px;height:2px;background:#eeeeee"></div>
<div class="r" style="left:706px;top:1928px;width:31px;height:31px;background:#fff;border:2px solid #c9c9c9;border-radius:6px;box-sizing:border-box"></div>
<svg class="r" style="left:762px;top:1923px;" width="84" height="84" viewBox="0 0 84 84"><defs><clipPath id="tc3"><rect x="2" y="2" width="80" height="80" rx="8"/></clipPath><filter id="bl3" x="-5%" y="-5%" width="110%" height="110%"><feGaussianBlur stdDeviation="0.6"/></filter></defs><g clip-path="url(#tc3)"><g transform="translate(2,2)" filter="url(#bl3)"><rect width="80" height="80" fill="#d5dadb"/><rect x="0" y="0" width="22" height="80" fill="#e7eaeb"/><rect x="22" y="12" width="14" height="6" fill="#7d8480"/><path d="M50 0 L80 0 L80 34 L70 36z" fill="#a9b1b5"/><path d="M60 0 L66 0 L80 24 L80 30z" fill="#eef1f2"/><rect x="0" y="36" width="80" height="4" fill="#8f9694"/><rect x="0" y="56" width="80" height="24" fill="#cfd6d4"/><rect x="70" y="40" width="2" height="40" fill="#9aa3a0"/><path d="M30 0 Q42 -2 50 6 L54 34 L46 50 L28 50 L26 24z" fill="#1a1616"/><rect x="34" y="12" width="12" height="11" rx="3" fill="#efefee"/><path d="M26 24 L56 22 L60 44 L28 46z" fill="#151515"/><path d="M38 28 L48 28 L43 38z" fill="#e6d3c7"/><path d="M26 42 Q40 46 60 42 L58 50 L26 52z" fill="#e9d5c8"/><path d="M28 52 L58 52 L60 80 L18 80z" fill="#1d242b"/><rect x="52" y="52" width="8" height="14" rx="2" fill="#101010"/></g></g><rect x="1" y="1" width="82" height="82" rx="9" fill="none" stroke="#d9dbde" stroke-width="2"/></svg>
<div class="t" style="left:861.0px;top:1929.9px;font-size:28.3px;line-height:28.3px;font-weight:400;color:#141414;">Summer Casual Plain Basic Minimalist Dress for Women</div>
<div class="t" style="left:861.0px;top:1976.2px;font-size:23.9px;line-height:23.9px;font-weight:400;color:#707172;">ID:1731071879853281902</div>
<div class="t" style="left:861.0px;top:2016.5px;font-size:23px;line-height:23px;font-weight:400;color:#707172;">1 SKUs</div>
<div class="r" style="left:3718px;top:767px;width:12px;height:1121px;background:#e4e4e4;border-radius:6px"></div>
<div class="r" style="left:2547px;top:677px;width:485px;height:1204px;border:7px solid #e8461f;box-sizing:border-box"></div>
<div class="r" style="left:3698px;top:1950px;width:96px;height:96px;background:#fff;border-radius:50%;box-shadow:0 6px 18px rgba(0,0,0,0.13)"></div>
<svg class="r" style="left:3718px;top:1970px;" width="56" height="56" viewBox="0 0 56 56"><defs><linearGradient id="sg" x1="0" y1="0" x2="1" y2="0"><stop offset="0" stop-color="#5aa9e6"/><stop offset="1" stop-color="#6fd3d3"/></linearGradient></defs><path d="M21.6 5 C23 15 25 19 38.4 21.8 C25 24.6 23 28.6 21.6 38.6 C20.2 28.6 18.2 24.6 4.8 21.8 C18.2 19 20.2 15 21.6 5z" fill="url(#sg)"/><path d="M38.5 30.5 C39.2 35 40.3 36.6 47 38.8 C40.3 41 39.2 42.6 38.5 47 C37.8 42.6 36.7 41 30 38.8 C36.7 36.6 37.8 35 38.5 30.5z" fill="#6ee0c8"/></svg>
</body></html>
